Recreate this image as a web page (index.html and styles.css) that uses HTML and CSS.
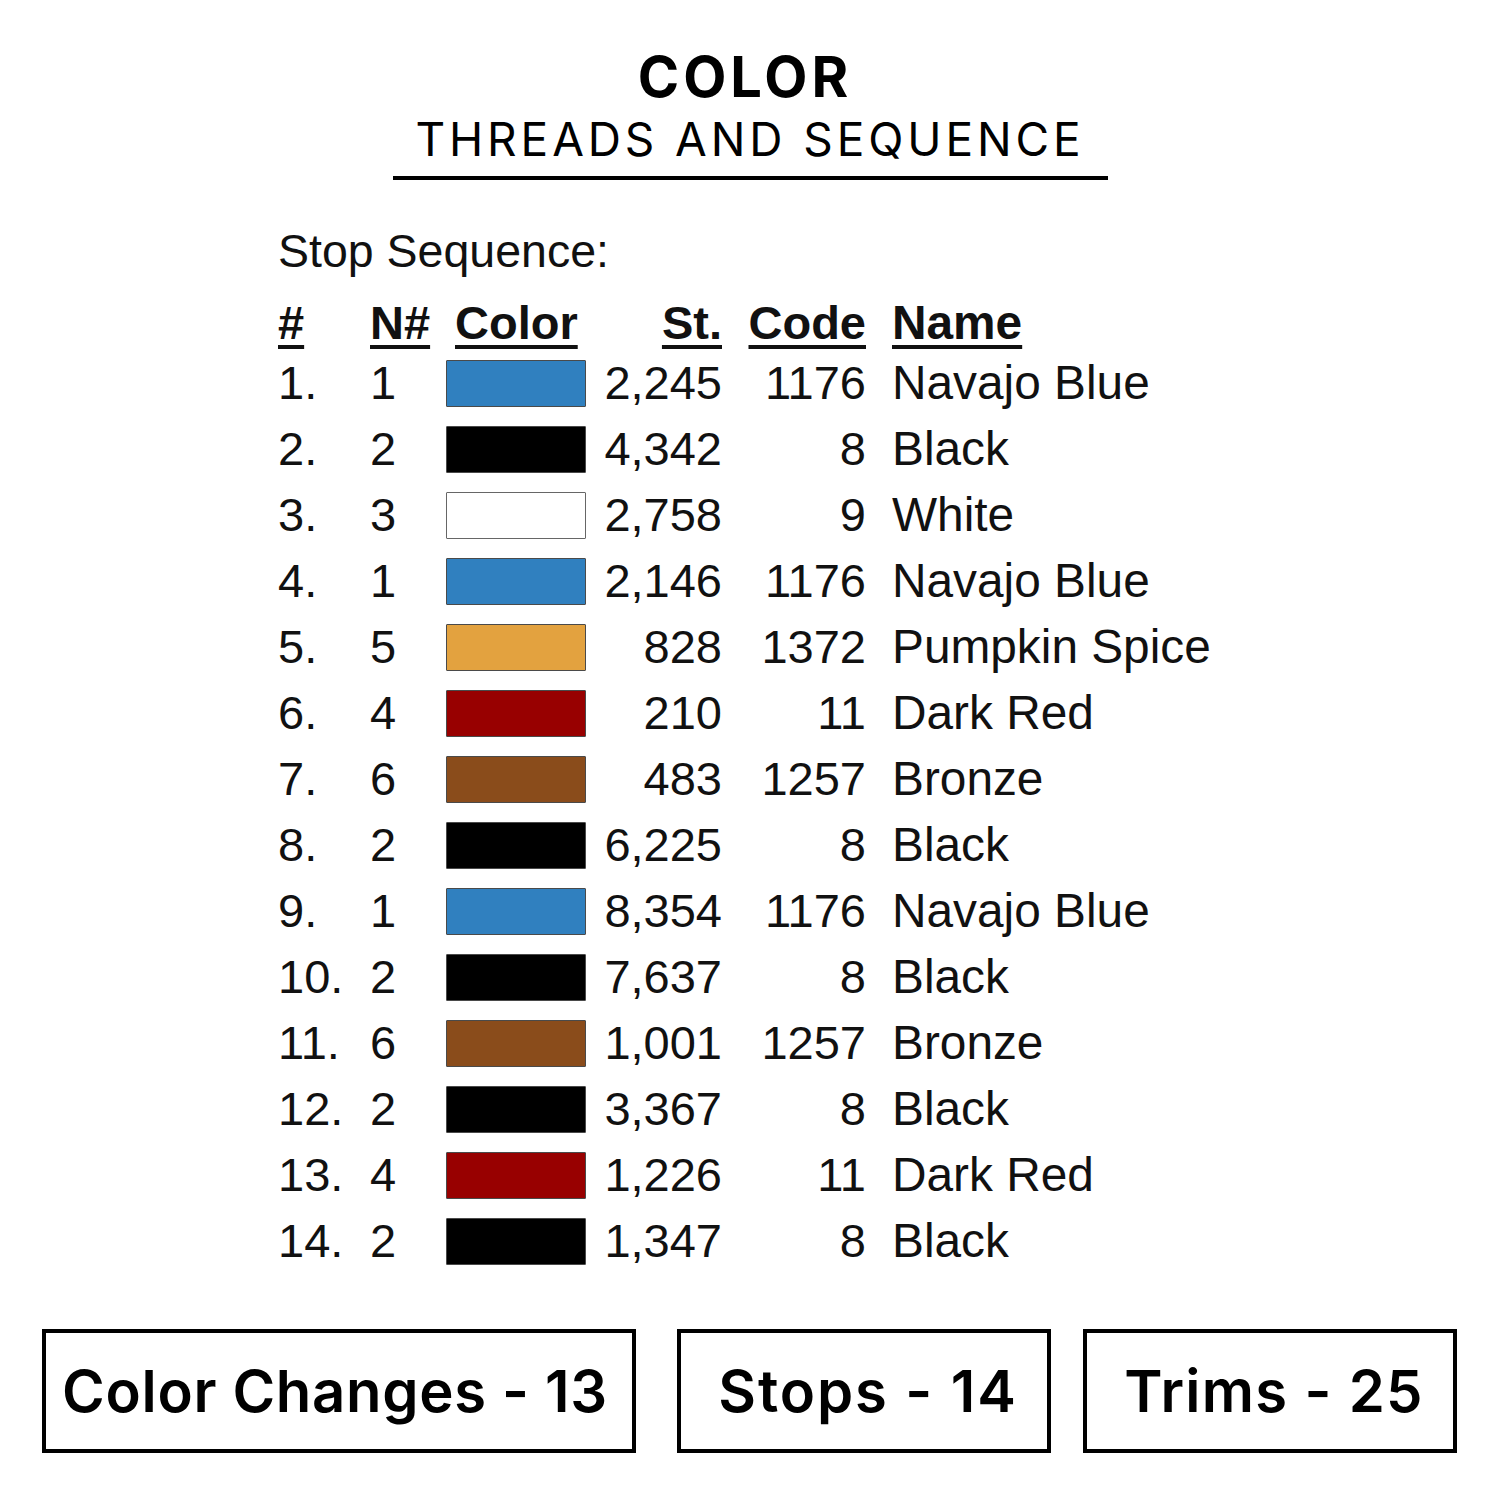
FILE: index.html
```html
<!DOCTYPE html>
<html>
<head>
<meta charset="utf-8">
<link rel="stylesheet" href="styles.css">
</head>
<body>
<div class="page">
  <header class="title">
    <div class="title-main">COLOR</div>
    <div class="title-sub">THREADS AND SEQUENCE</div>
    <div class="title-rule"></div>
  </header>

  <section class="seq">
    <div class="seq-caption">Stop Sequence:</div>
    <div class="grid">
      <div class="h"><span>#</span></div>
      <div class="h"><span>N#</span></div>
      <div class="h h-color"><span>Color</span></div>
      <div class="h r"><span>St.</span></div>
      <div class="h r"><span>Code</span></div>
      <div class="h name"><span>Name</span></div>

      <div>1.</div><div>1</div><div class="sw-cell"><div class="sw blue"></div></div><div class="r">2,245</div><div class="r">1176</div><div class="name">Navajo Blue</div>
      <div>2.</div><div>2</div><div class="sw-cell"><div class="sw black"></div></div><div class="r">4,342</div><div class="r">8</div><div class="name">Black</div>
      <div>3.</div><div>3</div><div class="sw-cell"><div class="sw white"></div></div><div class="r">2,758</div><div class="r">9</div><div class="name">White</div>
      <div>4.</div><div>1</div><div class="sw-cell"><div class="sw blue"></div></div><div class="r">2,146</div><div class="r">1176</div><div class="name">Navajo Blue</div>
      <div>5.</div><div>5</div><div class="sw-cell"><div class="sw orange"></div></div><div class="r">828</div><div class="r">1372</div><div class="name">Pumpkin Spice</div>
      <div>6.</div><div>4</div><div class="sw-cell"><div class="sw red"></div></div><div class="r">210</div><div class="r">11</div><div class="name">Dark Red</div>
      <div>7.</div><div>6</div><div class="sw-cell"><div class="sw bronze"></div></div><div class="r">483</div><div class="r">1257</div><div class="name">Bronze</div>
      <div>8.</div><div>2</div><div class="sw-cell"><div class="sw black"></div></div><div class="r">6,225</div><div class="r">8</div><div class="name">Black</div>
      <div>9.</div><div>1</div><div class="sw-cell"><div class="sw blue"></div></div><div class="r">8,354</div><div class="r">1176</div><div class="name">Navajo Blue</div>
      <div>10.</div><div>2</div><div class="sw-cell"><div class="sw black"></div></div><div class="r">7,637</div><div class="r">8</div><div class="name">Black</div>
      <div>11.</div><div>6</div><div class="sw-cell"><div class="sw bronze"></div></div><div class="r">1,001</div><div class="r">1257</div><div class="name">Bronze</div>
      <div>12.</div><div>2</div><div class="sw-cell"><div class="sw black"></div></div><div class="r">3,367</div><div class="r">8</div><div class="name">Black</div>
      <div>13.</div><div>4</div><div class="sw-cell"><div class="sw red"></div></div><div class="r">1,226</div><div class="r">11</div><div class="name">Dark Red</div>
      <div>14.</div><div>2</div><div class="sw-cell"><div class="sw black"></div></div><div class="r">1,347</div><div class="r">8</div><div class="name">Black</div>
    </div>
  </section>

  <footer class="stats">
    <div class="stat stat-wide">Color Changes - 13</div>
    <div class="stat stat-mid">Stops - 14</div>
    <div class="stat stat-last">Trims - 25</div>
  </footer>
</div>
</body>
</html>
```

FILE: styles.css
```css
html, body {
  margin: 0;
  padding: 0;
  background: #fff;
}

.page {
  width: 1500px;
  height: 1500px;
  background: #fff;
  color: #000;
  overflow: hidden;
}

/* ---------- Title ---------- */
.title {
  padding-top: 44px;
  display: flex;
  flex-direction: column;
  align-items: center;
  font-family: Inter, "Open Sans", sans-serif;
}

.title-main {
  font-size: 56px;
  font-weight: 700;
  line-height: 66px;
  letter-spacing: 4px;
  margin-left: -10px;
}

.title-sub {
  font-size: 46px;
  font-weight: 400;
  line-height: 52px;
  letter-spacing: 3.9px;
  margin-top: 3px;
  margin-left: 0;
}

.title-rule {
  width: 715px;
  height: 4px;
  background: #000;
  margin-top: 11px;
  margin-left: 1px;
}

/* ---------- Sequence table ---------- */
.seq {
  padding-left: 278px;
  margin-top: 38px;
  font-family: "Liberation Sans", Arial, sans-serif;
  font-size: 46.5px;
  color: #111;
}

.seq-caption {
  line-height: 66px;
}

.grid {
  display: grid;
  grid-template-columns: 92px 76px 140px 136px 144px auto;
  grid-auto-rows: 66px;
  line-height: 66px;
  font-size: 47px;
  white-space: nowrap;
}

.h {
  font-weight: 700;
  padding-top: 6px;
}

.h span {
  text-decoration: underline;
  text-decoration-thickness: 4px;
  text-underline-offset: 6px;
}

.h-color {
  padding-left: 9px;
}

.r {
  text-align: right;
}

.name {
  padding-left: 26px;
  font-size: 47.8px;
}

.sw-cell {
  display: flex;
  align-items: center;
}

.sw {
  width: 140px;
  height: 47px;
  box-sizing: border-box;
  border: 1.5px solid #4a4a4a;
  border-radius: 1px;
}

.blue { background: #3080bf; }
.black { background: #000; }
.white { background: #fff; border-color: #666; }
.orange { background: #e3a23f; }
.red { background: #980000; }
.bronze { background: #8a4c1b; }

/* ---------- Stats boxes ---------- */
.stats {
  display: flex;
  padding-left: 42px;
  margin-top: 55px;
  font-family: Inter, "Open Sans", sans-serif;
}

.stat {
  box-sizing: border-box;
  width: 374px;
  height: 124px;
  border: 4px solid #000;
  display: flex;
  align-items: center;
  justify-content: center;
  font-size: 58px;
  font-weight: 600;
  letter-spacing: 1.3px;
}

.stat-wide {
  width: 594px;
  margin-right: 41px;
  letter-spacing: 0.7px;
  padding-right: 8px;
}

.stat-mid {
  margin-right: 32px;
  letter-spacing: 1.9px;
  padding-left: 8px;
}

.stat-last {
  padding-left: 8px;
}
```
